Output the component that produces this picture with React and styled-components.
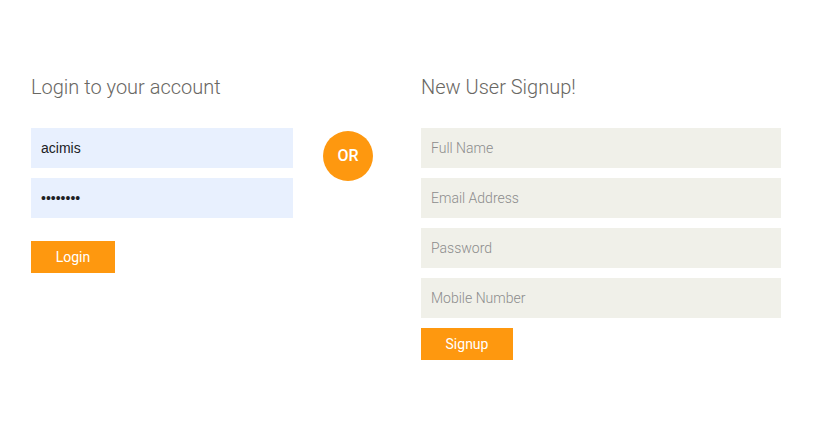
import { createGlobalStyle } from "styled-components";
import styled from "styled-components";

const GlobalStyle = createGlobalStyle`
  body {
    margin: 0;
    background: #fff;
    font-family: "Roboto", "Liberation Sans", sans-serif;
  }
  * { box-sizing: border-box; }
`;

function App() {
  return (
    <>
      <GlobalStyle />
      <Page>
        <LoginCol>
          <Title>Login to your account</Title>
          <Form onSubmit={(e) => e.preventDefault()}>
            <Input type="text" value="acimis" readOnly $filled />
            <Input type="password" value="12345678" readOnly $filled />
            <Button $top={13} $width={84}>Login</Button>
          </Form>
        </LoginCol>
        <OrCol>
          <Or>OR</Or>
        </OrCol>
        <SignupCol>
          <Title>New User Signup!</Title>
          <Form onSubmit={(e) => e.preventDefault()}>
            <Input type="text" placeholder="Full Name" />
            <Input type="email" placeholder="Email Address" />
            <Input type="password" placeholder="Password" />
            <Input type="text" placeholder="Mobile Number" />
            <Button $top={0} $width={92}>Signup</Button>
          </Form>
        </SignupCol>
      </Page>
    </>
  );
}

export default App;

const Page = styled.div`
  display: flex;
  align-items: flex-start;
  padding: 76px 0 0 31px;
`;

const LoginCol = styled.div`
  width: 262px;
`;

const OrCol = styled.div`
  margin: 55px 48px 0 30px;
`;

const SignupCol = styled.div`
  width: 360px;
`;

const Title = styled.h2`
  margin: 0 0 30px;
  color: #696763;
  font-family: "Roboto", sans-serif;
  font-size: 20px;
  font-weight: 300;
  line-height: 22px;
`;

const Form = styled.form`
  display: flex;
  flex-direction: column;
  align-items: flex-start;
`;

const Input = styled.input`
  display: block;
  width: 100%;
  height: 40px;
  margin: 0 0 10px;
  padding: 0 0 0 10px;
  border: none;
  outline: none;
  background: ${(p) => (p.$filled ? "#e8f0fe" : "#f0f0e9")};
  color: ${(p) => (p.$filled ? "#202124" : "#696763")};
  font-family: ${(p) =>
    p.$filled ? '"Liberation Sans", Arial, sans-serif' : '"Roboto", sans-serif'};
  font-size: 14px;
  font-weight: ${(p) => (p.$filled ? 400 : 300)};

  &::placeholder {
    color: #8c8c8c;
  }
`;

const Button = styled.button`
  width: ${(p) => p.$width}px;
  height: 32px;
  margin-top: ${(p) => p.$top}px;
  padding: 0;
  border: 0;
  border-radius: 0;
  background: #fe980f;
  color: #fff;
  font-family: "Roboto", sans-serif;
  font-size: 14px;
  cursor: pointer;
`;

const Or = styled.div`
  width: 50px;
  height: 50px;
  border-radius: 50%;
  background: #fe980f;
  color: #fff;
  font-family: "Roboto", sans-serif;
  font-size: 16px;
  font-weight: 500;
  line-height: 50px;
  text-align: center;
`;
